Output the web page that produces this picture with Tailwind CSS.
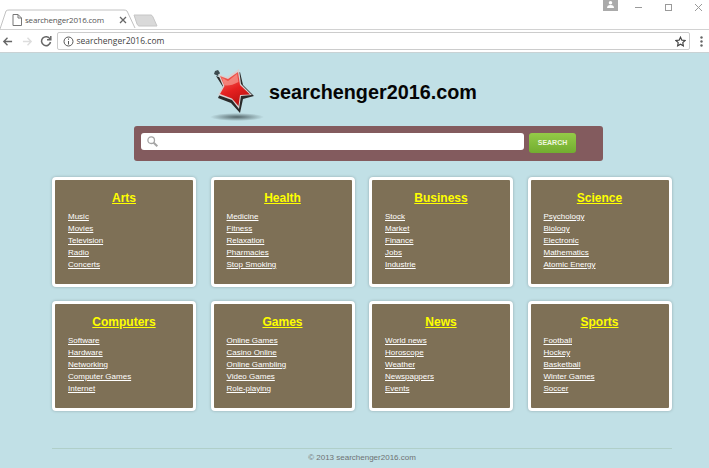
<!DOCTYPE html>
<html lang="en">
<head>
  <meta charset="UTF-8">
  <title>searchenger2016.com</title>
  <script src="https://cdn.jsdelivr.net/npm/@tailwindcss/browser@4"></script>
</head>
<body class="w-[709px] h-[468px] overflow-hidden bg-[#c1e0e6] font-['Liberation_Sans',Arial,sans-serif]">
  <!-- Browser chrome -->
  <header class="h-[53px] bg-white border-b border-[#c9d2d4]">
    <div class="relative h-[30px] border-b border-[#d2d2d2]">
      <svg class="absolute left-0 top-[9px]" width="140" height="20" viewBox="0 0 140 20" fill="none">
        <path d="M0 20 L6 2 Q7 1 9 1 L124 1 Q126 1 127 2 L135 19" fill="#fff" stroke="#c2c2c2"/>
      </svg>
      <svg class="absolute left-[133px] top-[14px]" width="25" height="13" viewBox="0 0 25 13">
        <path d="M1 1 H18 Q19 1 20 3 L24 12 H6 Q5 12 4 10 Z" fill="#d9d9d9" stroke="#c6c6c6"/>
      </svg>
      <div class="absolute left-[12px] top-[14px] flex items-center">
        <svg width="10" height="12" viewBox="0 0 10 12" fill="none" stroke="#777"><path d="M1 .5 H6 L9.500 4 V11.500 H1 Z M6 .5 V4 H9.500"/></svg>
        <span class="ml-[3px] w-[78px] text-[8px] leading-[12px] text-[#555] font-['Open_Sans',sans-serif] tracking-[-0.2px] whitespace-nowrap">searchenger2016.com</span>
        <svg class="ml-[16px]" width="8" height="8" viewBox="0 0 8 8" stroke="#666" stroke-width="1.300"><path d="M1 1 L7 7 M7 1 L1 7"/></svg>
      </div>
      <div class="absolute left-[603px] top-0 flex items-start">
        <div class="w-[15px] h-[11px] bg-[#aaaaaa] flex justify-center">
          <svg width="7" height="8" viewBox="0 0 8 9" fill="#fff"><circle cx="4" cy="3" r="2"/><path d="M0 9 Q0 5.500 4 5.500 Q8 5.500 8 9 Z"/></svg>
        </div>
        <svg class="ml-[16px] mt-[2px]" width="72" height="12" viewBox="0 0 72 12" fill="none" stroke="#9a9a9a">
          <path d="M1 5.500 H8"/><rect x="31.500" y="2.500" width="6" height="6"/><path d="M61 2 L68 9 M68 2 L61 9"/>
        </svg>
      </div>
    </div>
    <div class="flex items-center h-[22px] bg-white">
      <svg class="ml-[2px]" width="11" height="11" viewBox="0 0 12 12" fill="none" stroke="#666" stroke-width="1.500"><path d="M11 6 H2 M6 2 L2 6 L6 10"/></svg>
      <svg class="ml-[9px]" width="11" height="11" viewBox="0 0 12 12" fill="none" stroke="#dddddd" stroke-width="1.500"><path d="M1 6 H10 M6 2 L10 6 L6 10"/></svg>
      <svg class="ml-[7px]" width="12" height="12" viewBox="0 0 12 12" fill="none" stroke="#666" stroke-width="1.500"><path d="M10 4 A4.500 4.500 0 1 0 10.500 7"/><path d="M10.800 1 V4.800 H7" /></svg>
      <div class="ml-[5px] w-[633px] h-[18px] bg-white border border-[#cccccc] rounded-[2px] flex items-center">
        <svg class="ml-[5px]" width="11" height="11" viewBox="0 0 11 11" fill="none" stroke="#555"><circle cx="5.500" cy="5.500" r="4.500"/><path d="M5.500 5 V8.500 M5.500 2.500 V3.800"/></svg>
        <span class="ml-[2.500px] text-[8.500px] text-[#444] font-['Open_Sans',sans-serif] flex-1">searchenger2016.com</span>
        <svg class="mr-[3px]" width="11" height="11" viewBox="0 0 24 24" fill="none" stroke="#444" stroke-width="2.500"><path d="M12 2.500 L15 9 L22 9.800 L17 14.500 L18.300 21.500 L12 18 L5.700 21.500 L7 14.500 L2 9.800 L9 9 Z"/></svg>
      </div>
      <svg class="ml-[10px]" width="3" height="11" viewBox="0 0 3 11" fill="#666"><circle cx="1.500" cy="1.500" r="1.200"/><circle cx="1.500" cy="5.500" r="1.200"/><circle cx="1.500" cy="9.500" r="1.200"/></svg>
    </div>
  </header>

  <main class="flex flex-col items-start">
    <!-- Logo -->
    <div class="w-full h-[73px] flex items-start pl-[205px]">
      <svg class="mt-[11px]" width="65" height="60" viewBox="0 0 65 60">
        <defs>
          <radialGradient id="shadow"><stop offset="0" stop-color="#54676b"/><stop offset="1" stop-color="#c1e0e6"/></radialGradient>
          <linearGradient id="red" x1="0.300" y1="0" x2="0.700" y2="1"><stop offset="0" stop-color="#f2675c"/><stop offset="0.500" stop-color="#e52020"/><stop offset="1" stop-color="#b41010"/></linearGradient>
        </defs>
        <ellipse cx="32" cy="53" rx="27" ry="4" fill="url(#shadow)"/>
        <path d="M11 12 L22 16 L35 8 L38 21 L49 32 L38 35 L35 49 L26 39 L13 34 L18 23 Z" fill="#2a2a2a"/>
        <path d="M10 7 L13 6 L15 9 L13 12 L9 10 Z" fill="#3d4b4f"/>
        <path d="M13 10 L22 13 L34 5 L36 20 L47 31 L36 32 L34 45 L27 36 L13 31 L18 22 Z" fill="#d9d0d0"/>
        <path d="M15 12 L23 15 L33 8 L35 21 L45 30.500 L35 31 L33.500 42 L27 34.500 L15 30 L19.500 22 Z" fill="url(#red)"/>
        <path d="M17 14 L23 17 L32 10 L33.500 18 Q24 23 19 21 Z" fill="#f79b92" opacity="0.700"/>
      </svg>
      <h1 class="-ml-[1px] mt-[26px] text-[19.800px] leading-[26px] font-bold text-[#050505]">searchenger2016.com</h1>
    </div>

    <!-- Search bar -->
    <div class="ml-[134px] w-[469px] h-[35px] bg-[#835b5e] rounded-[3px] flex items-start pt-[7px] pl-[7px]">
      <div class="w-[383px] h-[17px] bg-white rounded-[3px] flex items-center pl-[6px]">
        <svg width="11" height="11" viewBox="0 0 11 11" fill="none" stroke="#a5a5a5" stroke-width="1.300"><circle cx="4.200" cy="4.200" r="3.300"/><path d="M6.700 6.700 L10.300 10.300" stroke-width="2"/></svg>
      </div>
      <button class="ml-[5px] w-[47px] h-[20px] rounded-[3px] bg-gradient-to-b from-[#94cb47] to-[#72ad30] text-[#eef6df] text-[7px] font-bold">SEARCH</button>
    </div>

    <!-- Categories -->
    <div class="mt-[16px] ml-[52px] grid grid-cols-[144px_144px_144px_144px] gap-x-[14.500px] gap-y-[14px]">
      <div class="h-[110px] bg-[#7e7056] border-[3px] border-white rounded-[4px] shadow-[0_0_3px_rgba(0,0,0,0.25)] pt-[10px]">
        <h2 class="text-center text-[12px] leading-[16px] font-bold text-[#ffff00] underline">Arts</h2>
        <ul class="mt-[5px] pl-[13px] text-[8px] leading-[12px] text-white underline">
          <li>Music</li><li>Movies</li><li>Television</li><li>Radio</li><li>Concerts</li>
        </ul>
      </div>
      <div class="h-[110px] bg-[#7e7056] border-[3px] border-white rounded-[4px] shadow-[0_0_3px_rgba(0,0,0,0.25)] pt-[10px]">
        <h2 class="text-center text-[12px] leading-[16px] font-bold text-[#ffff00] underline">Health</h2>
        <ul class="mt-[5px] pl-[13px] text-[8px] leading-[12px] text-white underline">
          <li>Medicine</li><li>Fitness</li><li>Relaxation</li><li>Pharmacies</li><li>Stop Smoking</li>
        </ul>
      </div>
      <div class="h-[110px] bg-[#7e7056] border-[3px] border-white rounded-[4px] shadow-[0_0_3px_rgba(0,0,0,0.25)] pt-[10px]">
        <h2 class="text-center text-[12px] leading-[16px] font-bold text-[#ffff00] underline">Business</h2>
        <ul class="mt-[5px] pl-[13px] text-[8px] leading-[12px] text-white underline">
          <li>Stock</li><li>Market</li><li>Finance</li><li>Jobs</li><li>Industrie</li>
        </ul>
      </div>
      <div class="h-[110px] bg-[#7e7056] border-[3px] border-white rounded-[4px] shadow-[0_0_3px_rgba(0,0,0,0.25)] pt-[10px]">
        <h2 class="text-center text-[12px] leading-[16px] font-bold text-[#ffff00] underline">Science</h2>
        <ul class="mt-[5px] pl-[13px] text-[8px] leading-[12px] text-white underline">
          <li>Psychology</li><li>Biology</li><li>Electronic</li><li>Mathematics</li><li>Atomic Energy</li>
        </ul>
      </div>
      <div class="h-[110px] bg-[#7e7056] border-[3px] border-white rounded-[4px] shadow-[0_0_3px_rgba(0,0,0,0.25)] pt-[10px]">
        <h2 class="text-center text-[12px] leading-[16px] font-bold text-[#ffff00] underline">Computers</h2>
        <ul class="mt-[5px] pl-[13px] text-[8px] leading-[12px] text-white underline">
          <li>Software</li><li>Hardware</li><li>Networking</li><li>Computer Games</li><li>Internet</li>
        </ul>
      </div>
      <div class="h-[110px] bg-[#7e7056] border-[3px] border-white rounded-[4px] shadow-[0_0_3px_rgba(0,0,0,0.25)] pt-[10px]">
        <h2 class="text-center text-[12px] leading-[16px] font-bold text-[#ffff00] underline">Games</h2>
        <ul class="mt-[5px] pl-[13px] text-[8px] leading-[12px] text-white underline">
          <li>Online Games</li><li>Casino Online</li><li>Online Gambling</li><li>Video Games</li><li>Role-playing</li>
        </ul>
      </div>
      <div class="h-[110px] bg-[#7e7056] border-[3px] border-white rounded-[4px] shadow-[0_0_3px_rgba(0,0,0,0.25)] pt-[10px]">
        <h2 class="text-center text-[12px] leading-[16px] font-bold text-[#ffff00] underline">News</h2>
        <ul class="mt-[5px] pl-[13px] text-[8px] leading-[12px] text-white underline">
          <li>World news</li><li>Horoscope</li><li>Weather</li><li>Newspappers</li><li>Events</li>
        </ul>
      </div>
      <div class="h-[110px] bg-[#7e7056] border-[3px] border-white rounded-[4px] shadow-[0_0_3px_rgba(0,0,0,0.25)] pt-[10px]">
        <h2 class="text-center text-[12px] leading-[16px] font-bold text-[#ffff00] underline">Sports</h2>
        <ul class="mt-[5px] pl-[13px] text-[8px] leading-[12px] text-white underline">
          <li>Football</li><li>Hockey</li><li>Basketball</li><li>Winter Games</li><li>Soccer</li>
        </ul>
      </div>
    </div>

    <!-- Footer -->
    <footer class="mt-[37px] ml-[52px] w-[620px] border-t border-[#b0cfc9] pt-[3px] text-center text-[8px] leading-[12px] text-[#6e7273]">© 2013 searchenger2016.com</footer>
  </main>
</body>
</html>
